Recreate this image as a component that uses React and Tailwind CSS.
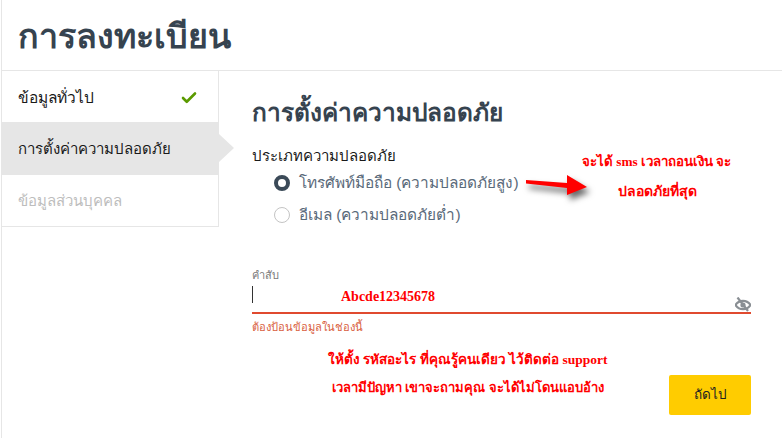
import { Check } from 'lucide-react';

function Annotation({ className, children }) {
  return (
    <div className={`absolute font-['Liberation_Serif',serif] font-bold text-[#f00] whitespace-nowrap ${className}`}>
      {children}
    </div>
  );
}

function Radio({ checked, label }) {
  return (
    <div className="flex items-center h-[32px] pl-[22px]">
      {checked ? (
        <span className="w-4 h-4 rounded-full border-[4px] border-[#3b4a58] bg-white" />
      ) : (
        <span className="w-4 h-4 rounded-full border border-[#c4c4c4] bg-white" />
      )}
      <span className="ml-[9px] text-[15.4px] text-[#5a6a7a]">{label}</span>
    </div>
  );
}

function EyeSlash() {
  return (
    <svg className="absolute right-0 bottom-0" width="16" height="15" viewBox="0 0 16 15" fill="none">
      <path d="M0.5 8 C4 2.5 12 2.5 15.5 8 C12 13.5 4 13.5 0.5 8 Z" stroke="#8a8f94" strokeWidth="2.2" />
      <circle cx="8" cy="8" r="2.6" fill="#8a8f94" />
      <path d="M2.5 0.5 L13 14" stroke="#8a8f94" strokeWidth="2.2" />
    </svg>
  );
}

export default function App() {
  return (
    <div className="w-[782px] h-[438px] overflow-hidden bg-white pl-px">
      <div className="relative h-full border-l border-[#e6e6e6] font-['Liberation_Sans',sans-serif]">
        <header className="h-[71px] pt-[2px] border-b border-[#e6e6e6] pl-[16px] flex items-center">
          <h1 className="text-[34px] font-bold text-[#36434f]">การลงทะเบียน</h1>
        </header>

        <div className="flex">
          <aside className="w-[217px] h-[156px] border-r border-b border-[#e6e6e6] shrink-0">
            <div className="h-[51px] pt-[2px] flex items-center justify-between pl-[16px] pr-[20px] text-[15.5px] text-[#1a1a1a]">
              ข้อมูลทั่วไป
              <Check size={18} strokeWidth={3.5} className="text-[#5b9a00]" />
            </div>
            <div className="relative h-[53px] pt-[2px] flex items-center pl-[16px] bg-[#e6e6e6] w-[217px] text-[15px] text-[#1a1a1a]">
              การตั้งค่าความปลอดภัย
              <span className="absolute left-full top-[12px] border-y-[14px] border-y-transparent border-l-[15px] border-l-[#e6e6e6]" />
            </div>
            <div className="h-[51px] pt-[2px] flex items-center pl-[16px] text-[15px] text-[#bdbdbd]">ข้อมูลส่วนบุคคล</div>
          </aside>

          <main className="flex-1 pl-[33px] pr-[31px]">
            <h2 className="mt-[26px] text-[24.4px] font-bold text-[#36434f] leading-[32px]">การตั้งค่าความปลอดภัย</h2>
            <p className="mt-[16px] text-[15px] text-[#1a1a1a] leading-[22px]">ประเภทความปลอดภัย</p>
            <Radio checked label="โทรศัพท์มือถือ (ความปลอดภัยสูง)" />
            <Radio label="อีเมล (ความปลอดภัยต่ำ)" />

            <label className="block mt-[36px] text-[11px] leading-[16px] text-[#7a7a7a]">คำสับ</label>
            <div className="relative h-[31px] border-b-2 border-[#e04a2f]">
              <span className="absolute left-0 top-[3px] h-[17px] w-px bg-[#333]" />
              <EyeSlash />
            </div>
            <p className="mt-[6px] text-[11.2px] leading-[14px] text-[#d9603f]">ต้องป้อนข้อมูลในช่องนี้</p>
            <div className="flex justify-end mt-[41px]">
              <button className="w-[82px] h-[40px] rounded-[2px] bg-[#ffcc00] text-[13.5px] text-[#222]">ถัดไป</button>
            </div>
          </main>
        </div>

        <Annotation className="left-[580px] top-[152px] text-[13.3px]">จะได้ sms เวลาถอนเงิน จะ</Annotation>
        <Annotation className="left-[616px] top-[181px] text-[14px]">ปลอดภัยที่สุด</Annotation>
        <Annotation className="left-[339px] top-[286px] text-[14px]">Abcde12345678</Annotation>
        <Annotation className="left-[326px] top-[350px] text-[13.5px]">ให้ตั้ง รหัสอะไร ที่คุณรู้คนเดียว ไว้ติดต่อ support</Annotation>
        <Annotation className="left-[330px] top-[378px] text-[13px]">เวลามีปัญหา เขาจะถามคุณ จะได้ไม่โดนแอบอ้าง</Annotation>

        <svg className="absolute left-[522px] top-[172px] drop-shadow-[3px_5px_3px_rgba(0,0,0,0.6)]" width="72" height="32" viewBox="0 0 72 32">
          <path d="M2 8 L43 11 L43 3 L63 15 L43 23 L43 16 L2 11.5 Z" fill="#f00" />
        </svg>
      </div>
    </div>
  );
}
